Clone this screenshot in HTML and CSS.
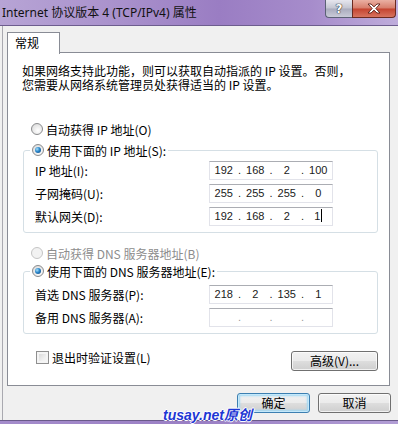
FILE: index.html
```html
<!DOCTYPE html>
<html lang="zh-CN">
<head>
    <meta charset="UTF-8">
    <title>Internet 协议版本 4 (TCP/IPv4) 属性</title>
    <link rel="stylesheet" href="styles.css">
</head>
<body>
    <div class="window">
        <div class="titlebar">
            <span class="title">Internet 协议版本 4 (TCP/IPv4) 属性</span>
            <div class="caption-buttons">
                <span class="cap-btn help">?</span>
                <span class="cap-btn close">
                    <svg width="14" height="11" viewBox="0 0 14 11">
                        <path d="M1 1 L4 1 L7 3.8 L10 1 L13 1 L8.8 5.5 L13 10 L10 10 L7 7.2 L4 10 L1 10 L5.2 5.5 Z" fill="#fff" stroke="#5a1e16" stroke-width="0.9" stroke-linejoin="round"/>
                    </svg>
                </span>
            </div>
        </div>

        <div class="client">
            <div class="tabs"><span class="tab">常规</span></div>
            <div class="panel">
                <p class="intro">如果网络支持此功能，则可以获取自动指派的 IP 设置。否则，<br>您需要从网络系统管理员处获得适当的 IP 设置。</p>

                <div class="option"><span class="radio"></span>自动获得 IP 地址(O)</div>
                <fieldset class="group">
                    <legend><span class="radio checked"></span>使用下面的 IP 地址(S):</legend>
                    <div class="row">
                        <span class="label">IP 地址(I):</span>
                        <div class="ipbox"><span>192</span><i>.</i><span>168</span><i>.</i><span>2</span><i>.</i><span>100</span></div>
                    </div>
                    <div class="row">
                        <span class="label">子网掩码(U):</span>
                        <div class="ipbox"><span>255</span><i>.</i><span>255</span><i>.</i><span>255</span><i>.</i><span>0</span></div>
                    </div>
                    <div class="row">
                        <span class="label">默认网关(D):</span>
                        <div class="ipbox"><span>192</span><i>.</i><span>168</span><i>.</i><span>2</span><i>.</i><span>1<b class="caret"></b></span></div>
                    </div>
                </fieldset>

                <div class="option dns-auto disabled"><span class="radio"></span>自动获得 DNS 服务器地址(B)</div>
                <fieldset class="group dns">
                    <legend><span class="radio checked"></span>使用下面的 DNS 服务器地址(E):</legend>
                    <div class="row">
                        <span class="label">首选 DNS 服务器(P):</span>
                        <div class="ipbox"><span>218</span><i>.</i><span>2</span><i>.</i><span>135</span><i>.</i><span>1</span></div>
                    </div>
                    <div class="row">
                        <span class="label">备用 DNS 服务器(A):</span>
                        <div class="ipbox empty"><span></span><i>.</i><span></span><i>.</i><span></span><i>.</i><span></span></div>
                    </div>
                </fieldset>

                <div class="bottom-row">
                    <label class="check"><span class="checkbox"></span>退出时验证设置(L)</label>
                    <button class="btn advanced">高级(V)...</button>
                </div>
            </div>

            <div class="dialog-buttons">
                <button class="btn default">确定</button>
                <button class="btn">取消</button>
            </div>
        </div>

        <div class="frame-bottom"></div>
        <span class="watermark">tusay.net原创</span>
    </div>
</body>
</html>
```

FILE: styles.css
```css
/* Dialoogvenster */
body {
    margin: 0;
    width: 398px;
    height: 424px;
    overflow: hidden;
    background-color: #f0f0f0;
    font-family: "Noto Sans CJK SC", sans-serif;
    font-size: 12px;
    color: #000;
}
.window {
    position: relative;
    display: flex;
    flex-direction: column;
    height: 424px;
}

/* Titelbalk */
.titlebar {
    display: flex;
    align-items: flex-start;
    height: 25px;
    border-bottom: 1px solid #6d5d8e;
    background: linear-gradient(to right, #b7a4d5 0%, #a991cc 30%, #9a7dc3 55%, #a68ccb 78%, #bfaddb 100%);
}
.title {
    padding: 5px 0 0 2px;
    line-height: 16px;
    font-family: "Noto Sans", "Noto Sans CJK SC", sans-serif;
    font-size: 12px;
    color: #111;
}
.caption-buttons {
    display: flex;
    margin-left: auto;
    margin-right: 2px;
}
.cap-btn {
    display: flex;
    align-items: center;
    justify-content: center;
    height: 17px;
    border: 1px solid #5b6175;
    border-top: none;
}
.help {
    width: 26px;
    border-right: none;
    border-bottom-left-radius: 4px;
    background: linear-gradient(#e6e6ee 0%, #c3c5d1 48%, #a9abbd 52%, #c9cbd8 100%);
    font-family: "DejaVu Sans", sans-serif;
    font-weight: bold;
    font-size: 12px;
    color: #fff;
    text-shadow: 0 0 1px #333, 0 0 1px #333, 0 0 1px #333;
}
.close {
    width: 42px;
    border-color: #6b2a20;
    border-bottom-right-radius: 4px;
    background: linear-gradient(#eab0a3 0%, #d77d6b 48%, #c4432f 52%, #d8735f 100%);
}

/* Werkgebied */
.client {
    flex: 1;
    margin-left: 2px;
    padding: 6px 8px 0 4px;
    border-left: 1px solid #a9a9b0;
}
.tabs {
    display: flex;
    height: 21px;
}
.tab {
    position: relative;
    z-index: 1;
    width: 44px;
    height: 21px;
    padding-left: 7px;
    border: 1px solid #898c95;
    border-bottom: none;
    background-color: #fff;
    line-height: 20px;
}
.panel {
    box-sizing: border-box;
    height: 334px;
    margin-top: -1px;
    padding: 0 11px 0 14px;
    border: 1px solid #898c95;
    background-color: #fff;
}
.intro {
    margin: 11px 0 0;
    line-height: 14px;
}

/* Keuzerondjes */
.option {
    display: flex;
    align-items: center;
    height: 14px;
    margin: 30px 0 0 9px;
}
.option.dns-auto {
    margin-top: 13px;
}
.disabled {
    color: #8d8d8d;
}
.radio {
    box-sizing: border-box;
    display: inline-flex;
    align-items: center;
    justify-content: center;
    width: 12px;
    height: 12px;
    margin-right: 3px;
    border: 1px solid #8a8b8d;
    border-radius: 50%;
    background: radial-gradient(circle at 60% 65%, #ffffff 0%, #e6e6e6 60%, #cfcfcf 100%);
}
.disabled .radio {
    border-color: #c5c5c5;
    background: #f2f2f2;
}
.radio.checked::after {
    content: "";
    width: 6px;
    height: 6px;
    border-radius: 50%;
    background: radial-gradient(circle at 35% 35%, #a8e0fb 0%, #2a86c9 45%, #0d3f78 100%);
}

/* Groepen */
.group {
    margin: 7px 0 0 1px;
    padding: 4px 0 6px 11px;
    border: 1px solid #d5dfe5;
    border-radius: 3px;
}
.group.dns {
    margin-top: 4px;
    padding-top: 7px;
}
.group legend {
    display: flex;
    align-items: center;
    height: 14px;
    margin-left: -5px;
    padding: 0 2px;
}
.row {
    display: flex;
    align-items: center;
    height: 19px;
    margin-bottom: 4px;
}
.row:last-child {
    margin-bottom: 0;
}
.label {
    width: 174px;
}
.ipbox {
    box-sizing: border-box;
    display: grid;
    grid-template-columns: 1fr 4px 1fr 4px 1fr 4px 1fr;
    width: 124px;
    height: 19px;
    border: 1px solid #e2e3ea;
    border-top-color: #abadb3;
    font-family: "Liberation Sans", sans-serif;
    font-size: 11px;
    line-height: 17px;
    color: #1a1a1a;
}
.ipbox span {
    text-align: center;
}
.ipbox i {
    font-style: normal;
    text-align: center;
}
.ipbox.empty i {
    color: #9a9a9a;
}
.caret {
    display: inline-block;
    width: 1px;
    height: 13px;
    margin-left: 1px;
    vertical-align: -2px;
    background-color: #000;
}

/* Onderste rij */
.bottom-row {
    display: flex;
    justify-content: space-between;
    margin-top: 17px;
    padding-left: 14px;
}
.check {
    display: flex;
    align-items: center;
    align-self: flex-start;
    height: 13px;
}
.checkbox {
    box-sizing: border-box;
    width: 13px;
    height: 13px;
    margin-right: 3px;
    border: 1px solid #8f8f8f;
    background: linear-gradient(135deg, #d2d2d2 0%, #efefef 60%, #fafafa 100%);
    box-shadow: inset 0 0 0 2px #f4f4f4;
}

/* Knoppen */
.btn {
    box-sizing: border-box;
    width: 73px;
    height: 20px;
    padding: 0;
    border: 1px solid #707070;
    border-radius: 3px;
    background: linear-gradient(#f2f2f2 0%, #ebebeb 48%, #dddddd 52%, #cfcfcf 100%);
    box-shadow: inset 0 0 0 1px rgba(255, 255, 255, 0.7);
    font-family: "Noto Sans CJK SC", sans-serif;
    font-size: 12px;
    line-height: 18px;
    color: #000;
}
.btn.advanced {
    width: 87px;
}
.btn.default {
    border-color: #3c7fb1;
    box-shadow: inset 0 0 0 1px #c4e8fa, inset 0 0 2px 2px #9fd8f5;
}
.dialog-buttons {
    display: flex;
    justify-content: flex-end;
    gap: 8px;
    margin-top: 7px;
    margin-right: -1px;
}

/* Onderrand en watermerk */
.frame-bottom {
    height: 3px;
    border-top: 1px solid #6a5a8a;
    background: linear-gradient(to right, #a48ccb, #9a7fc4 50%, #b29ed5);
}
.watermark {
    position: absolute;
    left: 163px;
    top: 407px;
    font-family: "Liberation Sans", "Noto Sans CJK SC", sans-serif;
    font-size: 14px;
    font-weight: bold;
    font-style: italic;
    line-height: 16px;
    color: #1d36d4;
    text-shadow: 1px 0 0 #fff, -1px 0 0 #fff, 0 1px 0 #fff, 0 -1px 0 #fff;
}
```
